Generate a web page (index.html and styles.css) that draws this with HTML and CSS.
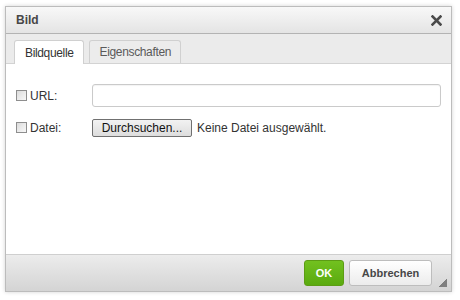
FILE: index.html
```html
<html>
<head>
    <link rel="stylesheet" href="styles.css">
</head>
<body>
    <div class="dialog">
        <div class="dialog-title">
            <span>Bild</span>
            <svg class="close-icon" width="11" height="11" viewBox="0 0 11 11">
                <path d="M1.5 1.5 L9.5 9.5 M9.5 1.5 L1.5 9.5" stroke="#4a4a4a" stroke-width="2.6" stroke-linecap="square"/>
            </svg>
        </div>
        <div class="dialog-tabs">
            <div class="tab tab-active">Bildquelle</div>
            <div class="tab">Eigenschaften</div>
        </div>
        <div class="dialog-content">
            <label class="field-label"><span class="check"></span>URL:</label>
            <div class="text-input"></div>

            <label class="field-label"><span class="check"></span>Datei:</label>
            <div class="file-row">
                <span class="file-btn">Durchsuchen...</span>
                <span>Keine Datei ausgewählt.</span>
            </div>
        </div>
        <div class="dialog-footer">
            <button class="btn btn-ok">OK</button>
            <button class="btn btn-cancel">Abbrechen</button>
            <span class="resize-grip"></span>
        </div>
    </div>
</body>
</html>
```

FILE: styles.css
```css
:root {
    --def-fg: #333;
    --def-fn: "Liberation Sans", Arial, sans-serif;
}

* {
    box-sizing: border-box;
    font-family: var(--def-fn);
    margin: 0px;
    padding: 0px;
}

body {
    background-color: #fff;
    color: var(--def-fg);
    font-size: 12px;
    padding: 6px 0 0 5px;
}

.dialog {
    width: 447px;
    height: 286px;
    border: 1px solid #bcbcbc;
    box-shadow: 0 0 4px rgba(0, 0, 0, 0.18);
    display: flex;
    flex-direction: column;
}

.dialog-title {
    height: 27px;
    border-bottom: 1px solid #b3b3b3;
    background: linear-gradient(#f8f8f8, #e4e4e4);
    padding: 0 9px 0 10px;

    display: flex;
    align-items: center;
    justify-content: space-between;

    font-weight: bold;
    font-size: 12px;
    color: #474747;
}

.close-icon {
    margin-top: 1px;
}

.dialog-tabs {
    height: 30px;
    background-color: #ebebeb;
    border-bottom: 1px solid #d3d3d3;
    padding: 6px 0 0 8px;

    display: flex;
    align-items: flex-end;
    gap: 5px;
}

.tab {
    height: 23px;
    padding: 0 9px 0 10px;
    border: 1px solid #d0d0d0;
    border-bottom: none;
    border-radius: 3px 3px 0 0;
    background-color: #ececec;
    color: #5a5a5a;
    letter-spacing: -0.35px;

    display: flex;
    align-items: center;
}

.tab-active {
    height: 24px;
    margin-bottom: -1px;
    background-color: #fff;
    color: #333;
}

.dialog-content {
    height: 190px;
    background-color: #fff;
    padding: 20px 10px 0 10px;

    display: grid;
    grid-template-columns: 76px 1fr;
    grid-auto-rows: min-content;
    align-items: center;
    row-gap: 12px;
}

.field-label {
    display: flex;
    align-items: center;
    gap: 3px;
}

.check {
    width: 11px;
    height: 11px;
    border: 1px solid #8e8e8e;
    background: linear-gradient(135deg, #dcdcdc, #f8f8f8);
    margin-top: -1px;
}

.text-input {
    height: 23px;
    border: 1px solid #cacaca;
    border-radius: 3px;
    box-shadow: inset 0 1px 1px rgba(0, 0, 0, 0.05);
}

.file-row {
    display: flex;
    align-items: center;
    gap: 5px;
}

.file-btn {
    width: 100px;
    height: 18px;
    border: 1px solid #707070;
    border-radius: 2px;
    background: linear-gradient(#f2f2f2, #dddddd);
    color: #111;

    display: flex;
    align-items: center;
    justify-content: center;
}

.dialog-footer {
    flex: 1;
    border-top: 1px solid #cfcfcf;
    background: linear-gradient(#ececec, #d4d4d4);
    padding: 5px 4px 0 0;

    display: flex;
    justify-content: flex-end;
    align-items: flex-start;
    gap: 5px;
}

.btn {
    height: 26px;
    border-radius: 3px;
    font-size: 11px;
    font-weight: bold;
    cursor: pointer;
}

.btn-ok {
    width: 40px;
    border: 1px solid #5c9c14;
    background: linear-gradient(#72c11f, #5aaa0f);
    color: #fff;
}

.btn-cancel {
    width: 83px;
    border: 1px solid #bdbdbd;
    background: linear-gradient(#ffffff, #ececec);
    color: #474747;
}

.resize-grip {
    align-self: flex-end;
    margin: 0 0 4px 1px;
    width: 9px;
    height: 9px;
    background: linear-gradient(135deg, transparent 50%, #7f7f7f 50%);
}
```
